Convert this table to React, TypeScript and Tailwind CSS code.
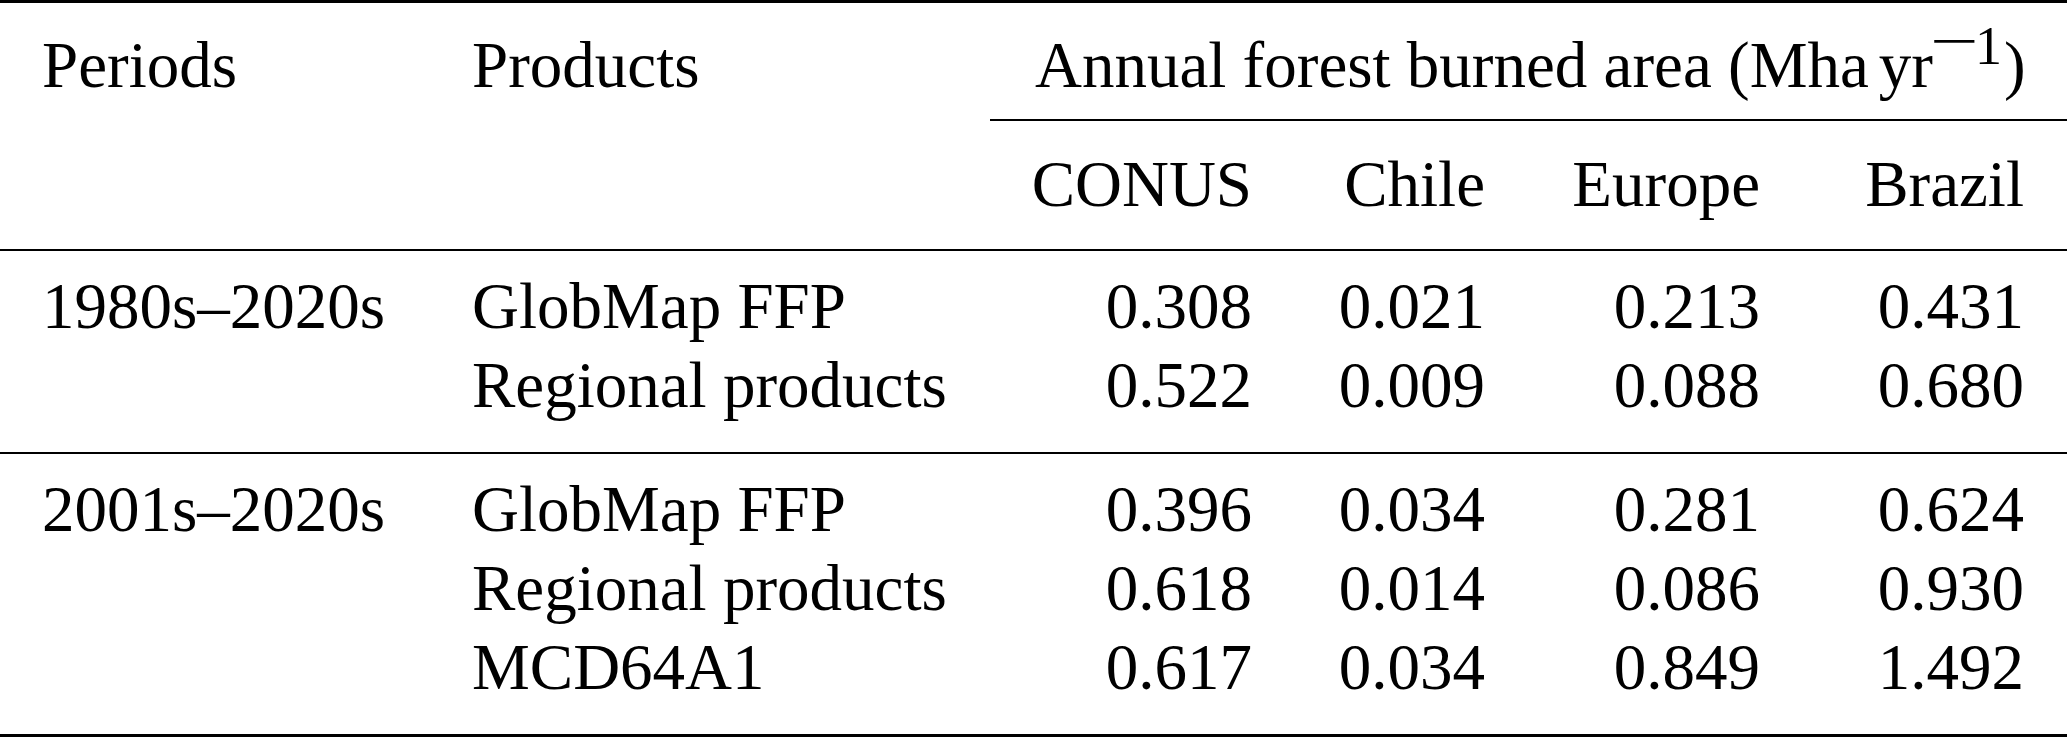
import React from 'react';

interface DataRow {
  period?: string;
  product: string;
  values: string[];
}

const cols = 'grid grid-cols-[429px_561px_305px_233px_275px_264px]';

const regions = ['CONUS', 'Chile', 'Europe', 'Brazil'];

const groups: DataRow[][] = [
  [
    { period: '1980s–2020s', product: 'GlobMap FFP', values: ['0.308', '0.021', '0.213', '0.431'] },
    { product: 'Regional products', values: ['0.522', '0.009', '0.088', '0.680'] },
  ],
  [
    { period: '2001s–2020s', product: 'GlobMap FFP', values: ['0.396', '0.034', '0.281', '0.624'] },
    { product: 'Regional products', values: ['0.618', '0.014', '0.086', '0.930'] },
    { product: 'MCD64A1', values: ['0.617', '0.034', '0.849', '1.492'] },
  ],
];

function Header() {
  return (
    <div className={`${cols} leading-[79px]`}>
      <div className="pl-[42px] pt-[23px] pb-[14px]">Periods</div>
      <div className="pl-[43px] pt-[23px] pb-[14px]">Products</div>
      <div className="col-span-4 pl-[45px] pt-[23px] pb-[14px] whitespace-nowrap">
        Annual forest burned area (Mha
        <span className="inline-block w-[10px]" />
        yr
        <span className="text-[54px] leading-[0] align-[23px] mr-[2px]">
          <span className="inline-block w-[42px] text-center relative -top-[5px]">
            <span className="inline-block scale-x-[1.6]">−</span>
          </span>
          1
        </span>
        )
      </div>
      <div className="col-start-3 col-span-4 h-[2px] bg-black" />
      {regions.map((r, i) => (
        <div key={r} className={`${i === 0 ? 'col-start-3' : ''} pr-[43px] pt-[24px] pb-[25px] text-right`}>
          {r}
        </div>
      ))}
    </div>
  );
}

function Group({ rows }: { rows: DataRow[] }) {
  return (
    <div className={`${cols} pt-[16px] pb-[27px] leading-[79px]`}>
      {rows.map((row, i) => (
        <React.Fragment key={i}>
          <div className="pl-[42px] whitespace-nowrap">{row.period ?? ''}</div>
          <div className="pl-[43px] whitespace-nowrap">{row.product}</div>
          {row.values.map((v, j) => (
            <div key={j} className="pr-[43px] text-right">{v}</div>
          ))}
        </React.Fragment>
      ))}
    </div>
  );
}

export default function App() {
  return (
    <div className="w-[2067px] h-[738px] bg-white text-black font-['Liberation_Serif',serif] text-[65px]">
      <div className="h-[3px] bg-black" />
      <Header />
      <div className="h-[2px] bg-black" />
      <Group rows={groups[0]} />
      <div className="h-[2px] bg-black" />
      <Group rows={groups[1]} />
      <div className="h-[3px] bg-black" />
    </div>
  );
}
